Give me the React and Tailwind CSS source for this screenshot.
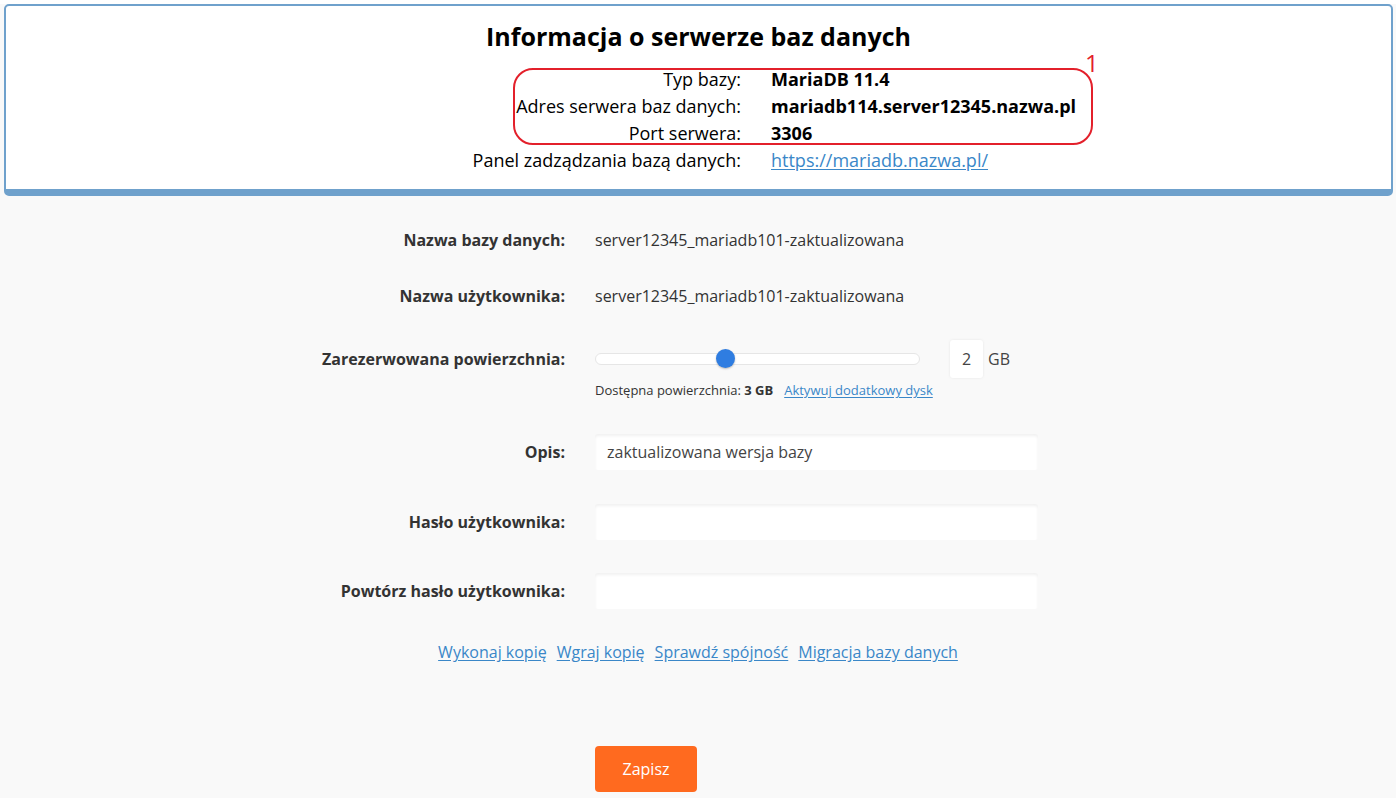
import React from 'react';

const font = { fontFamily: '"Open Sans", "Noto Sans", sans-serif' };

// --- górny panel z informacjami o serwerze ---
function ServerInfo() {
  const rows = [
    ['Typ bazy:', <b key="a" className="font-bold">MariaDB 11.4</b>],
    ['Adres serwera baz danych:', <b key="b" className="font-bold">mariadb114.server12345.nazwa.pl</b>],
    ['Port serwera:', <b key="c" className="font-bold">3306</b>],
    [
      'Panel zadządzania bazą danych:',
      <a key="d" href="#" className="text-[#3a87c8] underline underline-offset-2">
        https://mariadb.nazwa.pl/
      </a>,
    ],
  ];

  return (
    <div className="ml-[4px] mr-[3px] mt-[4px] bg-white border-2 border-b-[7px] border-[#6fa1cc] rounded-[5px] pt-[14px] pb-[15px]">
      <h1 className="text-center text-[25px] leading-[32px] font-bold text-black">
        Informacja o serwerze baz danych
      </h1>
      <div className="relative mt-[14px]">
        {rows.map(([label, value]) => (
          <div key={label} className="flex h-[27px] items-center text-[18px] text-black">
            <div className="w-[735px] text-right">{label}</div>
            <div className="ml-[30px]">{value}</div>
          </div>
        ))}
        {/* adnotacja 1 */}
        <div className="absolute left-[507px] top-[2px] w-[580px] h-[77px] border-2 border-[#e3202b] rounded-[20px] pointer-events-none" />
        <div className="absolute left-[1079px] top-[-16px] text-[24px] leading-[26px] text-[#e3202b]">1</div>
      </div>
    </div>
  );
}

function Row({ label, children, className = '' }) {
  return (
    <div className={`flex items-center ${className}`}>
      <div className="w-[565px] text-right text-[16px] font-bold text-[#333]">{label}</div>
      <div className="ml-[30px] text-[16px] text-[#333]">{children}</div>
    </div>
  );
}

function Input({ value = '' }) {
  return (
    <div className="w-[443px] h-[36px] bg-white rounded-[3px] shadow-[inset_0_2px_3px_rgba(0,0,0,0.06)] flex items-center px-[12px] text-[16px] text-[#444]">
      {value}
    </div>
  );
}

export default function App() {
  return (
    <div className="min-h-[798px] bg-[#f9f9f9] pb-[6px]" style={font}>
      <ServerInfo />

      <Row label="Nazwa bazy danych:" className="h-[24px] mt-[32px]">
        server12345_mariadb101-zaktualizowana
      </Row>
      <Row label="Nazwa użytkownika:" className="h-[24px] mt-[32px]">
        server12345_mariadb101-zaktualizowana
      </Row>

      {/* suwak powierzchni */}
      <Row label="Zarezerwowana powierzchnia:" className="h-[38px] mt-[32px]">
        <div className="flex items-center">
          <div className="relative w-[325px] h-[12px] bg-white border border-[#e6e6e6] rounded-full">
            <div className="absolute left-[120px] top-[-5px] w-[19px] h-[19px] rounded-full bg-[#2f7de1] shadow-[0_1px_2px_rgba(0,0,0,0.25)]" />
          </div>
          <div className="ml-[30px] w-[33px] h-[38px] bg-white rounded-[3px] shadow-[0_0_3px_rgba(0,0,0,0.08)] flex items-center justify-center text-[16px] text-[#444]">
            2
          </div>
          <span className="ml-[5px] text-[16px] text-[#444]">GB</span>
        </div>
      </Row>
      <div className="flex mt-[5px] h-[16px] items-center">
        <div className="ml-[595px] text-[13px] text-[#333]">
          Dostępna powierzchnia: <b className="font-bold">3 GB</b>
          <a href="#" className="ml-[11px] text-[#3a87c8] underline underline-offset-2">
            Aktywuj dodatkowy dysk
          </a>
        </div>
      </div>

      <Row label="Opis:" className="mt-[35px]">
        <Input value="zaktualizowana wersja bazy" />
      </Row>
      <Row label="Hasło użytkownika:" className="mt-[34px]">
        <Input />
      </Row>
      <Row label="Powtórz hasło użytkownika:" className="mt-[33px]">
        <Input />
      </Row>

      {/* akcje */}
      <div className="mt-[31px] h-[20px] flex justify-center gap-[10px] text-[16px] text-[#3a87c8]">
        <a href="#" className="underline underline-offset-2">Wykonaj kopię</a>
        <a href="#" className="underline underline-offset-2">Wgraj kopię</a>
        <a href="#" className="underline underline-offset-2">Sprawdź spójność</a>
        <a href="#" className="underline underline-offset-2">Migracja bazy danych</a>
      </div>

      <div className="mt-[86px] ml-[595px]">
        <button className="w-[102px] h-[46px] bg-[#ff6a1f] rounded-[4px] text-white text-[16px]">
          Zapisz
        </button>
      </div>
    </div>
  );
}
